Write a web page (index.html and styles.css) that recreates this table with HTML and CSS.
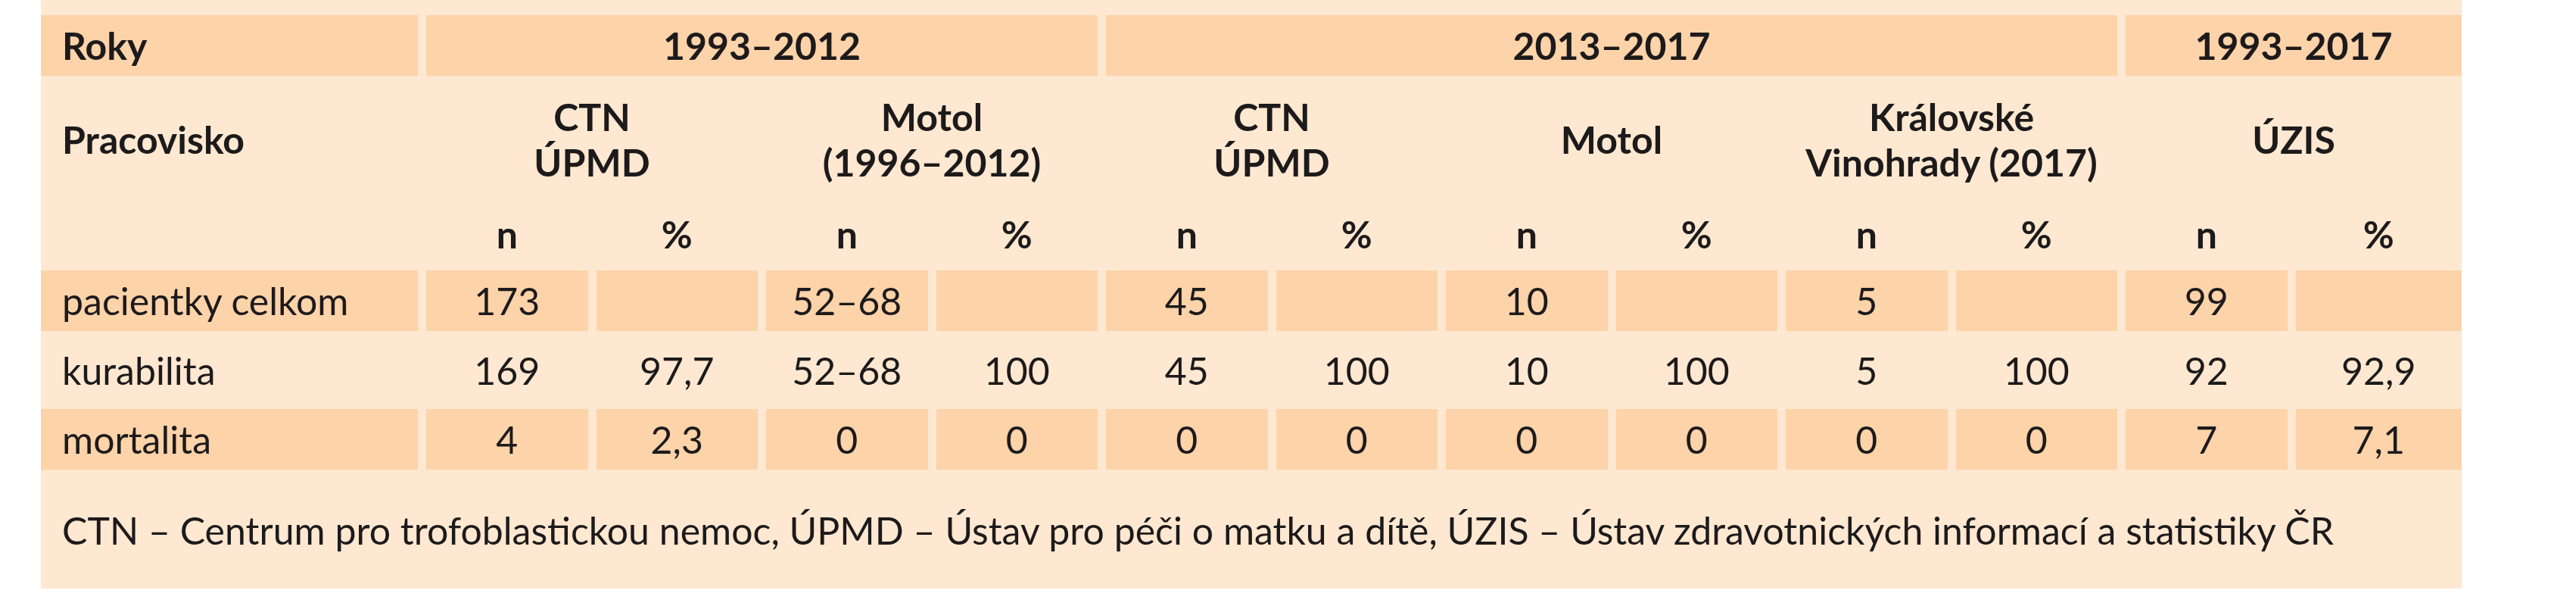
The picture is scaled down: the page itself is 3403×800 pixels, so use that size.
FILE: index.html
```html
<!DOCTYPE html>
<html lang="sk">
<head>
<meta charset="utf-8">
<title>Tabuľka</title>
<link rel="stylesheet" href="styles.css">
</head>
<body>
<div class="panel">
  <div class="grid">
    <!-- row 1 -->
    <div class="c hd first dark">Roky</div>
    <div class="c hd dark s4">1993–2012</div>
    <div class="c hd dark s6">2013–2017</div>
    <div class="c hd dark s2">1993–2017</div>

    <!-- row 2 -->
    <div class="c hd first">Pracovisko</div>
    <div class="c hd s2">CTN<br>ÚPMD</div>
    <div class="c hd s2">Motol<br>(1996–2012)</div>
    <div class="c hd s2">CTN<br>ÚPMD</div>
    <div class="c hd s2">Motol</div>
    <div class="c hd s2">Královské<br>Vinohrady (2017)</div>
    <div class="c hd s2">ÚZIS</div>

    <!-- row 3 -->
    <div class="c first"></div>
    <div class="c hd sub">n</div><div class="c hd sub">%</div>
    <div class="c hd sub">n</div><div class="c hd sub">%</div>
    <div class="c hd sub">n</div><div class="c hd sub">%</div>
    <div class="c hd sub">n</div><div class="c hd sub">%</div>
    <div class="c hd sub">n</div><div class="c hd sub">%</div>
    <div class="c hd sub">n</div><div class="c hd sub">%</div>

    <!-- row 4 -->
    <div class="c first dark">pacientky celkom</div>
    <div class="c dark">173</div><div class="c dark"></div>
    <div class="c dark">52–68</div><div class="c dark"></div>
    <div class="c dark">45</div><div class="c dark"></div>
    <div class="c dark">10</div><div class="c dark"></div>
    <div class="c dark">5</div><div class="c dark"></div>
    <div class="c dark">99</div><div class="c dark"></div>

    <!-- row 5 -->
    <div class="c first">kurabilita</div>
    <div class="c">169</div><div class="c">97,7</div>
    <div class="c">52–68</div><div class="c">100</div>
    <div class="c">45</div><div class="c">100</div>
    <div class="c">10</div><div class="c">100</div>
    <div class="c">5</div><div class="c">100</div>
    <div class="c">92</div><div class="c">92,9</div>

    <!-- row 6 -->
    <div class="c first dark">mortalita</div>
    <div class="c dark">4</div><div class="c dark">2,3</div>
    <div class="c dark">0</div><div class="c dark">0</div>
    <div class="c dark">0</div><div class="c dark">0</div>
    <div class="c dark">0</div><div class="c dark">0</div>
    <div class="c dark">0</div><div class="c dark">0</div>
    <div class="c dark">7</div><div class="c dark">7,1</div>
  </div>
  <p class="note">CTN – Centrum pro trofoblastickou nemoc, ÚPMD – Ústav pro péči o matku a dítě, ÚZIS – Ústav zdravotnických informací a statistiky ČR</p>
</div>
</body>
</html>
```
FILE: styles.css
```css
html, body {
  margin: 0;
  padding: 0;
  background: #ffffff;
}

body {
  font-family: "Lato", "Liberation Sans", sans-serif;
  font-size: 50px;
  color: #1d1a1b;
}

.panel {
  margin-left: 54px;
  width: 3198px;
  background: #fee8d1;
  padding-top: 20px;
}

.grid {
  display: grid;
  grid-template-columns: 498px repeat(11, 213.5px) 1fr;
  grid-template-rows: 80px 146px 78px 80px 81px 80px;
  column-gap: 11px;
  row-gap: 11px;
}

.c {
  display: flex;
  align-items: center;
  justify-content: center;
  text-align: center;
  line-height: 60px;
  white-space: nowrap;
}

.first {
  justify-content: flex-start;
  text-align: left;
  padding-left: 28px;
}

.hd {
  font-weight: 700;
}

.dark {
  background: #fdd3a9;
}

.s2 { grid-column: span 2; }
.s4 { grid-column: span 4; }
.s6 { grid-column: span 6; }

.sub {
  padding-top: 4px;
}

.note {
  margin: 0;
  padding: 50px 0 47px 28px;
  line-height: 60px;
  white-space: nowrap;
}
```
